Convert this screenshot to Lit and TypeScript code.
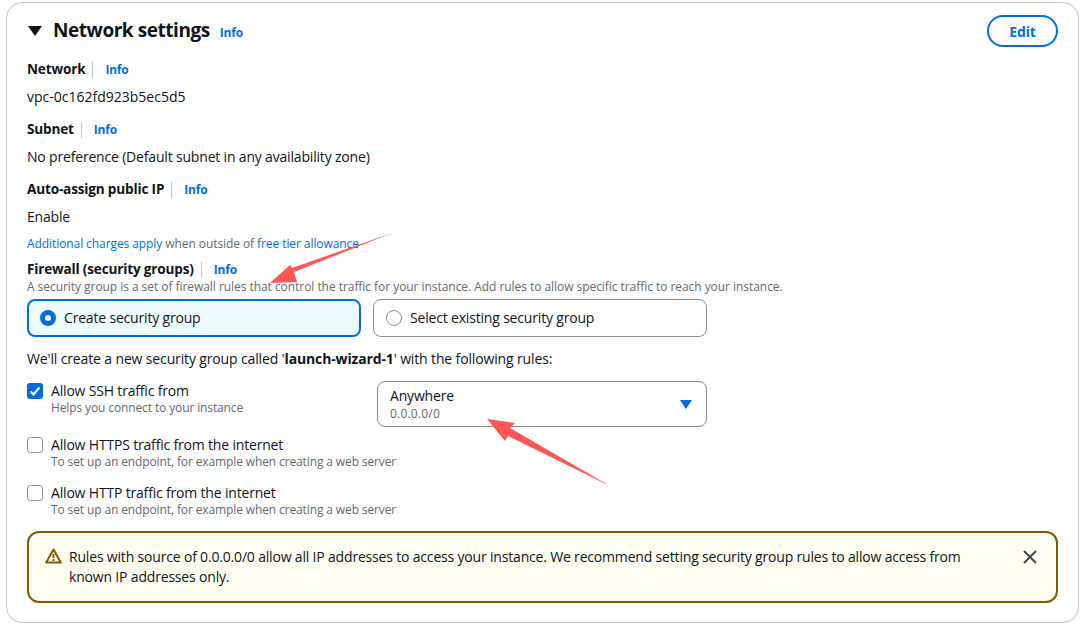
import {css, html, LitElement, svg} from "lit";
import {customElement} from "lit/decorators.js";

@customElement("app-root")
class AppRoot extends LitElement {
    static styles = css`
    :host {
        display: block;
        height: 624px;
        box-sizing: border-box;
        padding: 2px 4px 0 6px;
        font-family: "Open Sans", "Noto Sans", sans-serif;
        font-size: 14px;
        letter-spacing: -0.18px;
        color: #0f141a;
        background: #fff;
        overflow: hidden;
    }

    .card {
        position: relative;
        box-sizing: border-box;
        height: 621px;
        border: 1px solid #c6c6cd;
        border-radius: 16px;
        padding: 0 20px;
    }

    .head {
        display: flex;
        align-items: center;
        height: 56px;
    }

    .caret { width: 14px; height: 12px; margin-right: 11px; margin-left: 1px; }

    h2 {
        margin: 0 10px 2px 0;
        font-size: 19px;
        letter-spacing: -0.45px;
        font-weight: 700;
        line-height: 24px;
    }

    .info {
        color: #006ce0;
        font-size: 12px;
        letter-spacing: -0.2px;
        font-weight: 700;
    }

    .head .info { margin-top: 3px; }

    .edit {
        margin-left: auto;
        box-sizing: border-box;
        width: 71px;
        height: 32px;
        border: 2px solid #006ce0;
        border-radius: 16px;
        color: #006ce0;
        font-weight: 700;
        font-size: 14px;
        display: flex;
        align-items: center;
        justify-content: center;
    }

    .label {
        display: flex;
        align-items: center;
        box-sizing: border-box;
        height: 20px;
        padding-bottom: 2px;
        font-size: 13.6px;
        letter-spacing: -0.18px;
        font-weight: 700;
    }

    .label .info {
        border-left: 1px solid #c6c6cd;
        margin-left: 7px;
        margin-top: 4px;
        padding-left: 12px;
        height: 16px;
        line-height: 16px;
    }

    .value { line-height: 20px; margin: 8px 0 12px; height: 20px; }
    .value.id { letter-spacing: 0; }
    .value.short { margin-bottom: 9px; }

    .note { font-size: 12px; letter-spacing: -0.08px; line-height: 16px; color: #656871; margin: 0; height: 23px; }
    .note span { color: #006ce0; }

    .desc { font-size: 12px; letter-spacing: -0.12px; line-height: 14px; color: #656871; height: 14px; }
    .desc.long { letter-spacing: -0.05px; margin-top: 1px; }

    .tiles { display: flex; gap: 12px; margin-top: 5px; }

    .tile {
        box-sizing: border-box;
        width: 334px;
        height: 38px;
        display: flex;
        align-items: center;
        gap: 8px;
        padding: 0 12px 1px;
        border: 1px solid #8c8c94;
        border-radius: 8px;
    }

    .tile.on {
        border: 2px solid #006ce0;
        background: #f0fbff;
        padding: 0 11px 1px;
    }

    .radio { width: 16px; height: 16px; flex: none; }

    .created { margin: 12px 0 12px; line-height: 20px; height: 20px; letter-spacing: -0.14px; }

    .rules { display: flex; flex-direction: column; }

    .rule { display: flex; gap: 8px; height: 48px; }
    .rule .box { width: 16px; height: 16px; flex: none; margin-top: 2px; }
    .rule .title { line-height: 20px; }

    .ssh { display: flex; height: 54px; }
    .ssh .rule { width: 350px; }

    .select {
        box-sizing: border-box;
        width: 330px;
        height: 46px;
        display: flex;
        align-items: center;
        justify-content: space-between;
        padding: 0 12px;
        border: 1px solid #8c8c94;
        border-radius: 8px;
    }

    .select .main { line-height: 19px; }
    .select .sub { font-size: 12px; letter-spacing: 0.2px; line-height: 18px; color: #656871; }
    .select svg { width: 12px; height: 9px; margin-right: 2px; }

    .warn {
        box-sizing: border-box;
        height: 72px;
        margin-top: 0;
        width: 1031px;
        display: flex;
        gap: 8px;
        padding: 14px 16px 12px;
        border: 2px solid #855900;
        border-radius: 12px;
        background: #fffef0;
        line-height: 20px;
    }

    .warn .icon { width: 17px; height: 16px; flex: none; margin: 1px -1px 0 0; }
    .warn .text { flex: 1; max-width: 900px; }
    .warn .close { width: 14px; height: 14px; flex: none; margin: 3px 3px 0 auto; }

    .arrows { position: absolute; left: -7px; top: -3px; width: 1083px; height: 624px; pointer-events: none; }
    `

    rule(title: string, desc: string, checked = false) {
        return html`
            <div class="rule">
                <svg class="box" viewBox="0 0 16 16">
                    ${checked
                        ? svg`<rect width="16" height="16" rx="3" fill="#006ce0"/><path d="M3.5 8.5l3 3 6-7" fill="none" stroke="#fff" stroke-width="2"/>`
                        : svg`<rect x=".5" y=".5" width="15" height="15" rx="3" fill="#fff" stroke="#8c8c94"/>`}
                </svg>
                <div>
                    <div class="title">${title}</div>
                    <div class="desc">${desc}</div>
                </div>
            </div>
        `
    }

    render() {
        return html`
            <div class="card">
                <div class="head">
                    <svg class="caret" viewBox="0 0 14 12"><path d="M0 1h14L7 11z" fill="#0f141a"/></svg>
                    <h2>Network settings</h2>
                    <span class="info">Info</span>
                    <div class="edit">Edit</div>
                </div>

                <div class="label">Network<span class="info">Info</span></div>
                <div class="value id">vpc-0c162fd923b5ec5d5</div>
                <div class="label">Subnet<span class="info">Info</span></div>
                <div class="value">No preference (Default subnet in any availability zone)</div>
                <div class="label">Auto-assign public IP<span class="info">Info</span></div>
                <div class="value short">Enable</div>
                <p class="note"><span>Additional charges apply</span> when outside of <span>free tier allowance</span></p>

                <div class="label">Firewall (security groups)<span class="info">Info</span></div>
                <div class="desc long">A security group is a set of firewall rules that control the traffic for your instance. Add rules to allow specific traffic to reach your instance.</div>
                <div class="tiles">
                    <div class="tile on">
                        <svg class="radio" viewBox="0 0 16 16"><circle cx="8" cy="8" r="5.5" fill="#fff" stroke="#006ce0" stroke-width="5"/></svg>
                        Create security group
                    </div>
                    <div class="tile">
                        <svg class="radio" viewBox="0 0 16 16"><circle cx="8" cy="8" r="7.5" fill="#fff" stroke="#8c8c94"/></svg>
                        Select existing security group
                    </div>
                </div>

                <div class="created">We'll create a new security group called '<b>launch-wizard-1</b>' with the following rules:</div>

                <div class="rules">
                    <div class="ssh">
                        ${this.rule("Allow SSH traffic from", "Helps you connect to your instance", true)}
                        <div class="select">
                            <div>
                                <div class="main">Anywhere</div>
                                <div class="sub">0.0.0.0/0</div>
                            </div>
                            <svg viewBox="0 0 12 9"><path d="M0 0h12L6 9z" fill="#006ce0"/></svg>
                        </div>
                    </div>
                    ${this.rule("Allow HTTPS traffic from the internet", "To set up an endpoint, for example when creating a web server")}
                    ${this.rule("Allow HTTP traffic from the internet", "To set up an endpoint, for example when creating a web server")}
                </div>

                <div class="warn">
                    <svg class="icon" viewBox="0 0 17 16">
                        <path d="M8.5 1.5L1.2 14.5h14.6z" fill="none" stroke="#855900" stroke-width="2" stroke-linejoin="round"/>
                        <path d="M8.5 6v4M8.5 11v2" stroke="#855900" stroke-width="2"/>
                    </svg>
                    <div class="text">Rules with source of 0.0.0.0/0 allow all IP addresses to access your instance. We recommend setting security group rules to allow access from known IP addresses only.</div>
                    <svg class="close" viewBox="0 0 14 14"><path d="M1 1l12 12M13 1L1 13" stroke="#424650" stroke-width="2"/></svg>
                </div>

                <svg class="arrows" viewBox="0 0 1083 624">
                    <path d="M392 233L294 272L297 282L270 283L290 265L292 268Z" fill="#ff5757"/>
                    <path d="M610 486L508 436L505 441L487 419L515 423L510 428Z" fill="#ff5757"/>
                </svg>
            </div>
        `
    }
}
